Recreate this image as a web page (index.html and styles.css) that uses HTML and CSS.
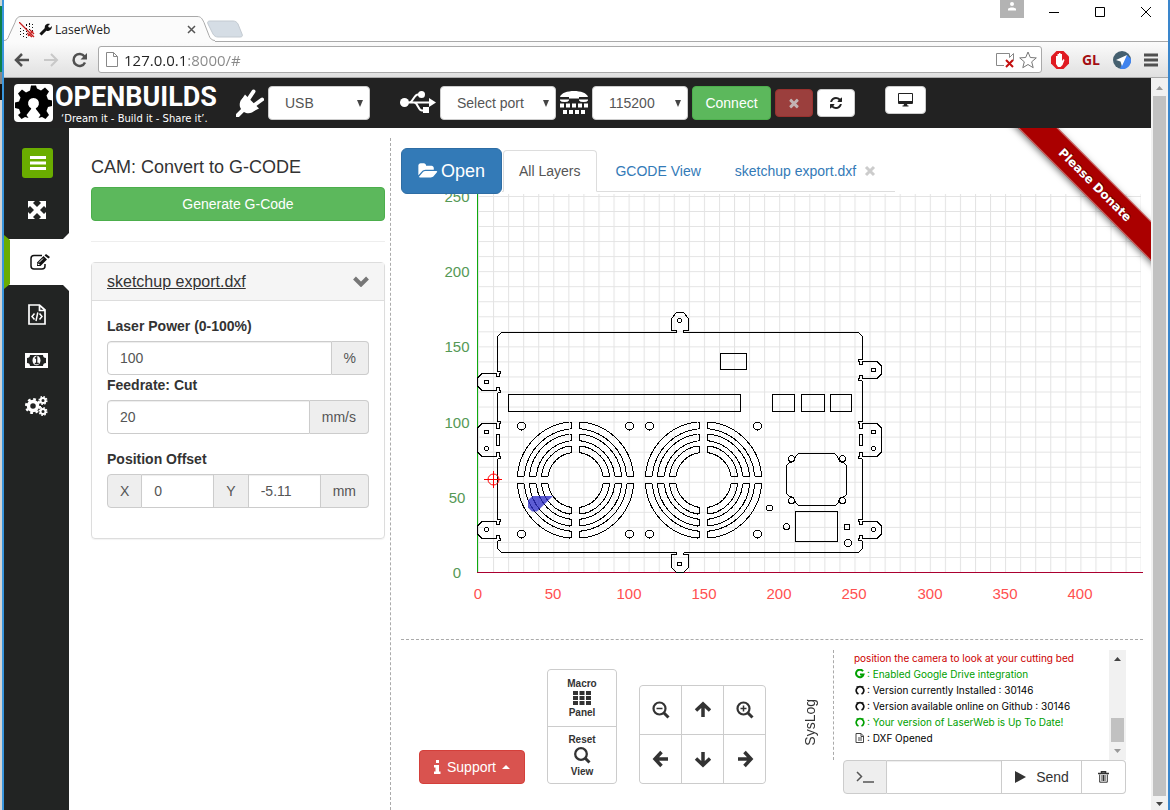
FILE: index.html
```html
<!DOCTYPE html>
<html lang="en">
<head>
<meta charset="utf-8">
<title>LaserWeb</title>
<link rel="stylesheet" href="styles.css">
</head>
<body>
<div class="window">

<header class="chrome">
  <div class="titlebar">
    <div class="tab">
      <svg class="tab-shape" width="240" height="26" viewBox="0 0 240 26" aria-hidden="true">
        <path d="M204 8c-1-2 0-3 2-3h23c2 0 4 1 5 3l4 10c1 2 0 3-2 3h-22c-2 0-4-1-5-3z" fill="#d5dde5" stroke="#c3cad1"/>
        <path d="M0 25c3 0 5-2 6-5l6-14c1-4 3-5 6-5h174c4 0 6 2 7 5l6 14c1 3 3 5 6 5v1H0z" fill="#fbfbfb"/>
        <path d="M0 24.500c3 0 4-2 5-5l6-13c1-4 3-6 6-6h176c4 0 5 2 7 6l5 13c1 3 3 5 6 5" fill="none" stroke="#a9a9a9"/>
      </svg>
      <svg class="favicon" width="16" height="16" viewBox="0 0 16 16" aria-hidden="true">
        <path d="M1.500 6v9M4.500 8v8M7.500 3v13M10.500 1v8M13.500 2v8M7 2.500h8" stroke="#111" stroke-dasharray="1 2" fill="none"/>
        <path d="M0 0l15 15M9 14l5-5M8 11l5 4M11 8l4 4" stroke="#c81e1e" stroke-width="1.300"/>
      </svg>
      <svg width="13" height="13" viewBox="0 0 13 13" aria-hidden="true"><path d="M1.500 11.500L7.500 5.500" stroke="#111" stroke-width="3"/><path d="M6 6c-1-3 1-6 5-5L9 3l1 1.500h1.500L13 3c0 3-2 5-5 5z" fill="#111"/></svg>
      <span class="tab-title">LaserWeb</span>
      <button class="plain" aria-label="Close tab"><svg width="9" height="9" viewBox="0 0 9 9"><path d="M1 1l7 7M8 1l-7 7" stroke="#555" stroke-width="1.500"/></svg></button>
    </div>
    <div class="window-buttons">
      <button class="plain user" aria-label="User"><svg width="10" height="9" viewBox="0 0 10 9"><circle cx="5" cy="2" r="2" fill="#fff"/><path d="M1 8.500V7c1-2 7-2 8 0v1.500z" fill="#fff"/></svg></button>
      <button class="plain" aria-label="Minimize"><svg width="12" height="12" viewBox="0 0 12 12"><path d="M1 6.500h10" stroke="#000"/></svg></button>
      <button class="plain" aria-label="Maximize"><svg width="12" height="12" viewBox="0 0 12 12"><path d="M1.500 1.500h9v9h-9z" stroke="#000" fill="none"/></svg></button>
      <button class="plain" aria-label="Close"><svg width="12" height="12" viewBox="0 0 12 12"><path d="M1 1l10 10M11 1L1 11" stroke="#000"/></svg></button>
    </div>
  </div>
  <div class="toolbar">
    <button class="plain" aria-label="Back"><svg width="16" height="14" viewBox="0 0 16 14"><path d="M15 7H2M8 1L2 7l6 6" fill="none" stroke="#505050" stroke-width="2.500"/></svg></button>
    <button class="plain" aria-label="Forward"><svg width="16" height="14" viewBox="0 0 16 14"><path d="M1 7h13M8 1l6 6-6 6" fill="none" stroke="#c8c8c8" stroke-width="2"/></svg></button>
    <button class="plain" aria-label="Reload"><svg width="16" height="16" viewBox="0 0 16 16"><path d="M13 10.500A6 6 0 1 1 12.500 4.500" fill="none" stroke="#505050" stroke-width="2.500"/><path d="M15 1v6.500H8.500z" fill="#505050"/></svg></button>
    <div class="address">
      <svg width="12" height="15" viewBox="0 0 12 15" aria-hidden="true"><path d="M.5.5h7l4 4v10H.5zM7.500.5v4h4" fill="#fff" stroke="#888"/></svg>
      <input class="url" type="text" value="127.0.0.1:8000/#" aria-label="Address">
      <svg width="20" height="17" viewBox="0 0 20 17" aria-hidden="true"><path d="M8 14.500H.5v-12h13v4l4-4v7" fill="none" stroke="#888"/><path d="M10 9l7 7M17 9l-7 7" stroke="#c40f0f" stroke-width="2"/></svg>
      <svg width="18" height="18" viewBox="0 0 18 18" aria-hidden="true"><path d="M9 1l2.300 5.500 6 .4-4.600 3.900 1.500 5.900L9 13.500l-5.200 3.200 1.500-5.900L.7 6.900l6-.4z" fill="#fff" stroke="#777"/></svg>
    </div>
    <button class="plain" aria-label="Blocker"><svg width="18" height="18" viewBox="0 0 18 18"><path d="M5.500 0h7L18 5.500v7L12.500 18h-7L0 12.500v-7z" fill="#e01b22"/><path d="M5 10V5h1.500v3V3H8v5V2h1.500v6V3H11v7l1.500-2 1 1-2 5-2 2H7l-2-3z" fill="#fff"/></svg></button>
    <button class="plain gl">GL</button>
    <button class="plain" aria-label="Send to device"><svg width="18" height="18" viewBox="0 0 18 18"><circle cx="9" cy="9" r="9" fill="#45606f"/><path d="M14 4l4 4a9 9 0 0 1-11 10l2-6z" fill="#3f83ee"/><path d="M14 4L3 9l4.500 1.500L9 15z" fill="#fff"/></svg></button>
    <button class="plain" aria-label="Menu"><svg width="14" height="14" viewBox="0 0 14 14"><path d="M0 2h14M0 7h14M0 12h14" stroke="#505050" stroke-width="3"/></svg></button>
  </div>
</header>

<div class="page">
<div class="app">
  <nav class="navbar">
    <a class="logo" href="#" aria-label="OpenBuilds">
      <svg width="39" height="38" viewBox="0 0 39 38" aria-hidden="true">
        <rect width="39" height="38" rx="4" fill="#fff"/>
        <path d="M12.500 31L17.500 24.500a5.500 5.500 0 1 1 4 0L26.500 31l-2 3 3.500-1 3.500 2 3.500-4-2.500-4 1.500-4 4-1v-5.500l-4-1-1.500-4 2.500-4-4-4-4 3-4-2L22 1.500h-5l-1 5-4 2-4-3-4 4 2.500 4-1.500 4-4 1V24l4 1 1.500 4L4 31l3.500 4 3.500-2 3.500 1z" fill="#000"/>
        <path d="M17.500 24l-3 14h10l-3-14z" fill="#fff"/>
      </svg>
      <span class="logo-text"><strong>OPENBUILDS</strong><small>‘Dream it - Build it - Share it’.</small></span>
    </a>
    <label class="field plug">
      <svg width="28" height="28" viewBox="0 0 28 28" aria-label="Connection"><path d="M1.500 26.500l6-6" stroke="#fff" stroke-width="4" stroke-linecap="round"/><path d="M7 9L19 21c-3 4-8 4-11 2l-3-3c-2-3-2-8 2-11z" fill="#fff"/><path d="M9 5.500L23 19.500 18 22 6 10z" fill="#fff"/><path d="M12.500 10l5-7.500M18.500 16l7.500-5.500" stroke="#fff" stroke-width="4" stroke-linecap="round"/></svg>
      <span class="select"><select class="w-usb"><option>USB</option></select><svg class="caret" width="6" height="7" viewBox="0 0 6 7"><path d="M0 0h6L3 7z" fill="#444"/></svg></span>
    </label>
    <label class="field usb">
      <svg width="36" height="24" viewBox="0 0 36 24" aria-label="Port"><circle cx="4.500" cy="11.500" r="4.500" fill="#fff"/><path d="M4 11.500h26M9 11.500c4 0 5-8 9-8h3M14 11.500c4 0 4 8 8 8h3" stroke="#fff" stroke-width="2" fill="none"/><path d="M29 7l7 4.500-7 4.500z" fill="#fff"/><circle cx="21.500" cy="3.500" r="3.500" fill="#fff"/><path d="M23 16h6v6h-6z" fill="#fff"/></svg>
      <span class="select"><select class="w-port"><option>Select port</option></select><svg class="caret" width="6" height="7" viewBox="0 0 6 7"><path d="M0 0h6L3 7z" fill="#444"/></svg></span>
    </label>
    <label class="field tty">
      <svg width="30" height="24" viewBox="0 0 30 24" aria-label="Baud rate"><path d="M1 7.500V6c2-8 26-8 28 0v1.500M1 8.500h9v1q-1 1.500-4.500 1.500T1 9.500zM20 8.500h9v1q-1 1.500-4.500 1.500T20 9.500zM10 7.500V6c2-1 8-1 10 0v1.500h9V6H1v1.500z" fill="#fff"/><path d="M1 14.500h28" stroke="#fff" stroke-width="4" stroke-dasharray="4 2"/><path d="M4 21h22" stroke="#fff" stroke-width="4" stroke-dasharray="4 2"/></svg>
      <span class="select"><select class="w-baud"><option>115200</option></select><svg class="caret" width="6" height="7" viewBox="0 0 6 7"><path d="M0 0h6L3 7z" fill="#444"/></svg></span>
    </label>
    <button class="btn success connect">Connect</button>
    <button class="btn danger disabled small" aria-label="Disconnect"><svg width="14" height="14" viewBox="0 0 1792 1792"><path fill="#c3b3b3" d="M1490 1322q0 40-28 68l-136 136q-28 28-68 28t-68-28l-294-294-294 294q-28 28-68 28t-68-28l-136-136q-28-28-28-68t28-68l294-294-294-294q-28-28-28-68t28-68l136-136q28-28 68-28t68 28l294 294 294-294q28-28 68-28t68 28l136 136q28 28 28 68t-28 68l-294 294 294 294q28 28 28 68z"/></svg></button>
    <button class="btn small" aria-label="Refresh"><svg width="14" height="14" viewBox="0 0 1792 1792"><path fill="#222" d="M1639 1056q0 5-1 7-64 268-268 434.500t-478 166.500q-146 0-282.500-55t-243.500-157l-129 129q-19 19-45 19t-45-19-19-45v-448q0-26 19-45t45-19h448q26 0 45 19t19 45-19 45l-137 137q71 66 161 102t187 36q134 0 250-65t186-179q11-17 53-117 8-23 30-23h192q13 0 22.500 9.500t9.500 22.500zm25-800v448q0 26-19 45t-45 19h-448q-26 0-45-19t-19-45 19-45l138-138q-148-137-349-137-134 0-250 65t-186 179q-11 17-53 117-8 23-30 23h-199q-13 0-22.500-9.500t-9.500-22.500v-7q65-268 270-434.500t480-166.500q146 0 284 55.500t245 156.500l130-129q19-19 45-19t45 19 19 45z"/></svg></button>
    <button class="btn small monitor" aria-label="Fullscreen"><svg width="15" height="14" viewBox="0 0 15 14"><path d="M1 0h13q1 0 1 1v9q0 1-1 1H9l.5 1.500h1v1h-6v-1h1L6 11H1q-1 0-1-1V1q0-1 1-1zm0 1v7h13V1z" fill="#222" fill-rule="evenodd"/></svg></button>
  </nav>

  <div class="body">
    <nav class="sidebar">
      <div class="side-top">
        <button class="menu-btn" aria-label="Menu"><svg width="16" height="14" viewBox="0 0 16 14"><path d="M0 1.500h16M0 7h16M0 12.500h16" stroke="#fff" stroke-width="3"/></svg></button>
        <a href="#" aria-label="Jog"><svg width="18" height="18" viewBox="0 0 18 18"><path d="M0 0h7L5 2l4 4 4-4-2-2h7v7l-2-2-4 4 4 4 2-2v7h-7l2-2-4-4-4 4 2 2H0v-7l2 2 4-4-4-4-2 2z" fill="#fff"/></svg></a>
      </div>
      <a class="active" href="#" aria-label="CAM"><svg width="20" height="16" viewBox="0 0 20 16"><path d="M12 1.500H4q-3 0-3 3V12q0 3 3 3h8q3 0 3-3v-2" fill="none" stroke="#111" stroke-width="1.500"/><path d="M7 12V8.500L13.500 2 17 5.500 10.500 12zM14.500 1.500L16 0l4 3-1.500 1.500z" fill="#111"/><path d="M9 8.500L13 4.500M8 9.500v1h1.500" stroke="#fff" fill="none"/></svg></a>
      <div class="side-rest">
        <a href="#" aria-label="G-code"><svg width="18" height="21" viewBox="0 0 18 21"><path d="M1 1h10.500L17 6v14H1zM11.500 1v5.500H17" fill="none" stroke="#fff" stroke-width="1.700"/><path d="M6.500 9.500L4 12.500l2.500 3M11.500 9.500l2.500 3-2.500 3M9.800 8.500L8 17" fill="none" stroke="#fff" stroke-width="1.500"/></svg></a>
        <a href="#" aria-label="Quote"><svg width="23" height="15" viewBox="0 0 23 15"><path d="M0 0h23v15H0zm2 5v5q3 0 3 3h13q0-3 3-3V5q-3 0-3-3H5q0 3-3 3z" fill="#fff" fill-rule="evenodd"/><ellipse cx="11.500" cy="7.500" rx="4" ry="4.800" fill="#fff"/><path d="M10 5.500L11.700 4v6.500M9.800 10.500h4" stroke="#222" stroke-width="1.300" fill="none"/></svg></a>
        <a href="#" aria-label="Settings"><svg width="23" height="20" viewBox="0 0 23 20"><g fill="none" stroke="#fff"><circle cx="8" cy="10" r="4.500" stroke-width="3.500"/><circle cx="8" cy="10" r="6.800" stroke-width="2.500" stroke-dasharray="2.700 2.640"/><circle cx="18" cy="4.500" r="2.500" stroke-width="2"/><circle cx="18" cy="4.500" r="3.800" stroke-width="1.500" stroke-dasharray="1.500 1.480"/><circle cx="18" cy="15.500" r="2.500" stroke-width="2"/><circle cx="18" cy="15.500" r="3.800" stroke-width="1.500" stroke-dasharray="1.500 1.480"/></g></svg></a>
      </div>
    </nav>

    <section class="cam">
      <h1>CAM: Convert to G-CODE</h1>
      <button class="btn success block">Generate G-Code</button>
      <hr>
      <div class="panel">
        <div class="panel-head"><a href="#">sketchup export.dxf</a><svg width="16" height="11" viewBox="0 0 16 11" aria-hidden="true"><path d="M1.500 2L8 8.500 14.500 2" fill="none" stroke="#777" stroke-width="4"/></svg></div>
        <form class="panel-body">
          <label for="power">Laser Power (0-100%)</label>
          <div class="group"><input id="power" type="text" value="100"><span class="addon">%</span></div>
          <label for="feed">Feedrate: Cut</label>
          <div class="group last"><input id="feed" type="text" value="20"><span class="addon">mm/s</span></div>
          <label for="offx">Position Offset</label>
          <div class="group"><span class="addon">X</span><input id="offx" type="text" value="0"><span class="addon">Y</span><input type="text" value="-5.11" aria-label="Y offset"><span class="addon">mm</span></div>
        </form>
      </div>
    </section>

    <main class="work">
      <div class="tabs-row">
        <button class="btn primary open"><svg width="20" height="18" viewBox="0 0 1920 1792"><path fill="#fff" d="M1879 952q0 31-31 66l-336 396q-43 51-120.500 86.500t-143.500 35.500h-1088q-34 0-60.500-13t-26.500-43q0-31 31-66l336-396q43-51 120.500-86.500t143.500-35.500h1088q34 0 60.500 13t26.500 43zm-343-344v160h-832q-94 0-197 47.500t-164 119.500l-337 396-5 6q0-4-.5-12.500t-.5-12.500v-960q0-92 66-158t158-66h320q92 0 158 66t66 158v32h544q92 0 158 66t66 158z"/></svg>Open</button>
        <div class="tabs">
          <a class="current" href="#">All Layers</a>
          <a href="#">GCODE View</a>
          <a href="#">sketchup export.dxf <svg width="12" height="12" viewBox="0 0 12 12"><path d="M2 2l8 8M10 2l-8 8" stroke="#ccc" stroke-width="3"/></svg></a>
        </div>
      </div>

      <svg class="viewer" viewBox="401 194 742 445" preserveAspectRatio="xMinYMin slice" role="img" aria-label="Cutting bed">
        <defs>
          <pattern id="grid" x="478" y="196" width="15.060" height="15.040" patternUnits="userSpaceOnUse"><path d="M0 .5H15.060M.5 0V15.040" stroke="#000" stroke-opacity=".11" fill="none"/></pattern>
          <g id="quarter">
            <path d="M-57-3.500Q-58-3.500-58-5A58 58 0 0 1-6-58Q-4-58-4-57V-52Q-4-51-6-51A51 51 0 0 0-51-6Q-51-3.500-53-3.500Z"/>
            <path d="M-45-3.500Q-46-3.500-46-5A46 46 0 0 1-6-46Q-4-46-4-45V-40Q-4-39-6-39A39 39 0 0 0-39-6Q-39-3.500-41-3.500Z"/>
            <path d="M-33-3.500Q-34-3.500-34-5A34 34 0 0 1-6-34Q-4-34-4-33V-28Q-4-27-6-27A27 27 0 0 0-27-6Q-27-3.500-29-3.500Z"/>
          </g>
          <g id="fan">
            <use href="#quarter"/><use href="#quarter" transform="scale(-1 1)"/><use href="#quarter" transform="scale(1 -1)"/><use href="#quarter" transform="scale(-1 -1)"/>
            <circle cx="-54" cy="-54" r="4"/><circle cx="54" cy="-54" r="4"/><circle cx="-54" cy="54" r="4"/><circle cx="54" cy="54" r="4"/>
          </g>
          <path id="lug" d="M0-2H3V0H2V3H-1V0H-15.500L-20 4.500V12.500L-15.500 17H-1V14H2V17H3V19H0"/>
          <path id="lug2" d="M0-2H3V0H2V5H-1V0H-15.500L-20 4.500V28.500L-15.500 33H-1V29H2V33H3V35H0M-1 11H2V22H-1Z"/>
        </defs>
        <rect x="478" y="194" width="663" height="379" fill="url(#grid)"/>
        <path class="axis-line" d="M477.500 194V572" stroke="#0faa0f"/>
        <path class="axis-line" d="M477 572.500H1143" stroke="#aa0030"/>
        <g class="axis y">
          <text x="457" y="202">250</text><text x="457" y="277">200</text><text x="457" y="352">150</text><text x="457" y="428">100</text><text x="457" y="503">50</text><text x="457" y="578">0</text>
        </g>
        <g class="axis x">
          <text x="478" y="599">0</text><text x="553" y="599">50</text><text x="629" y="599">100</text><text x="704" y="599">150</text><text x="779" y="599">200</text><text x="854" y="599">250</text><text x="930" y="599">300</text><text x="1005" y="599">350</text><text x="1080" y="599">400</text>
        </g>
        <g class="drawing">
          <path d="M676.500 332.500H501.500L497.500 336.500V371.500M497.500 392.500V421.500M497.500 458.500V519.500M497.500 540.500V548.500L501.500 552.500H676.500M683.500 332.500H858.500L862.500 336.500V359.500M862.500 380.500V421.500M862.500 458.500V519.500M862.500 540.500V548.500L858.500 552.500H683.500"/>
          <path d="M676.500 332.500V330.500H671.500V318.500L676.500 312.500H683.500L688.500 318.500V330.500H683.500V332.500M676.500 552.500V554.500H671.500V567.500L676.500 572.500H683.500L688.500 567.500V554.500H683.500V552.500"/>
          <use href="#lug" x="497.500" y="373.500"/><use href="#lug2" x="497.500" y="423.500"/><use href="#lug" x="497.500" y="521.500"/>
          <g transform="translate(862 0) scale(-1 1)"><use href="#lug" x="0.500" y="361.500"/><use href="#lug2" x="0.500" y="423.500"/><use href="#lug" x="0.500" y="521.500"/></g>
          <circle cx="486.500" cy="382" r="2"/><circle cx="486.500" cy="432" r="2"/><circle cx="486.500" cy="448.500" r="2"/><circle cx="486.500" cy="529.500" r="2"/>
          <circle cx="873.500" cy="370" r="2"/><circle cx="873.500" cy="432" r="2"/><circle cx="873.500" cy="448.500" r="2"/><circle cx="873.500" cy="529.500" r="2"/>
          <circle cx="679.500" cy="320.500" r="2"/><circle cx="679.500" cy="564" r="2"/>
          <path d="M508.500 394.500H740.500V411.500H508.500ZM720.500 353.500H746.500V369.500H720.500ZM772.500 394.500H794.500V411.500H772.500ZM801.500 394.500H824.500V411.500H801.500ZM830.500 394.500H851.500V411.500H830.500ZM795.500 511.500H837.500V541.500H795.500Z"/>
          <path d="M798.500 453.500H834.500L837.500 456.500Q838.500 462.500 843.500 462.500L846.500 465.500V493.500Q846.500 496.500 841.500 497.500Q838.500 498.500 838.500 502.500L835.500 505.500H798.500L795.500 502.500Q794.500 496.500 789.500 496.500L786.500 493.500V465.500L789.500 462.500Q794.500 462.500 795.500 456.500Z"/>
          <circle cx="791.500" cy="458.500" r="3"/><circle cx="842.500" cy="458.500" r="3"/><circle cx="791.500" cy="500.500" r="3"/><circle cx="842.500" cy="500.500" r="3"/>
          <circle cx="769.500" cy="508" r="3"/><circle cx="786.500" cy="526.500" r="3"/><circle cx="847" cy="527" r="3"/><circle cx="848" cy="543" r="3.500"/>
          <use href="#fan" x="575.500" y="480"/><use href="#fan" x="703.500" y="480"/>
        </g>
        <path d="M528 500l5-4h20l-16 15.500h-5l-4-4z" fill="#3030c8" fill-opacity=".78"/>
        <path d="M484 479.500h18M493.500 471v17" stroke="#f00"/><circle cx="493.500" cy="479.500" r="5.500" fill="none" stroke="#f00"/>
      </svg>

      <div class="bottom">
        <button class="btn danger support"><svg width="7" height="14" viewBox="0 0 7 14"><path d="M2 0h3v3H2zM0 5h5v6.500h1.500V14H0v-2.500h1.500v-4H0z" fill="#fff"/></svg>Support<svg width="8" height="4" viewBox="0 0 8 4"><path d="M0 4l4-4 4 4z" fill="#fff"/></svg></button>
        <div class="macro">
          <button>Macro<svg width="18" height="14" viewBox="0 0 18 14"><path d="M0 2h18M0 7h18M0 12h18" stroke="#333" stroke-width="4" stroke-dasharray="5 1.500"/></svg>Panel</button>
          <button>Reset<svg width="18" height="17" viewBox="0 0 18 17"><circle cx="8" cy="7" r="5.800" fill="none" stroke="#333" stroke-width="2.300"/><path d="M12 11l4.500 4.500" stroke="#333" stroke-width="3"/></svg>View</button>
        </div>
        <div class="jog">
          <button aria-label="Zoom out"><svg width="18" height="18" viewBox="0 0 18 18"><circle cx="7.500" cy="7.500" r="6" fill="none" stroke="#333" stroke-width="2.200"/><path d="M11.500 11.500l5 5" stroke="#333" stroke-width="3"/><path d="M4.500 7.500h6" stroke="#333" stroke-width="1.500"/></svg></button>
          <button aria-label="Up"><svg width="18" height="18" viewBox="0 0 18 18"><path d="M9 16V4M2 9.500L9 3l7 6.500" fill="none" stroke="#333" stroke-width="3.500"/></svg></button>
          <button aria-label="Zoom in"><svg width="18" height="18" viewBox="0 0 18 18"><circle cx="7.500" cy="7.500" r="6" fill="none" stroke="#333" stroke-width="2.200"/><path d="M11.500 11.500l5 5" stroke="#333" stroke-width="3"/><path d="M4.500 7.500h6M7.500 4.500v6" stroke="#333" stroke-width="1.500"/></svg></button>
          <button aria-label="Left"><svg width="18" height="18" viewBox="0 0 18 18"><path d="M16 9H4M9.500 2L3 9l6.500 7" fill="none" stroke="#333" stroke-width="3.500"/></svg></button>
          <button aria-label="Down"><svg width="18" height="18" viewBox="0 0 18 18"><path d="M9 2v12M2 8.500L9 15l7-6.500" fill="none" stroke="#333" stroke-width="3.500"/></svg></button>
          <button aria-label="Right"><svg width="18" height="18" viewBox="0 0 18 18"><path d="M2 9h12M8.500 2L15 9l-6.500 7" fill="none" stroke="#333" stroke-width="3.500"/></svg></button>
        </div>
        <span class="syslog">SysLog</span>
        <div class="console">
          <div class="log">
            <div class="lines">
              <p class="red">position the camera to look at your cutting bed</p>
              <p class="green"><svg width="10" height="10" viewBox="0 0 10 10"><path d="M8 2.300A3.800 3.800 0 1 0 8.500 5.500H5" fill="none" stroke="#00a000" stroke-width="2"/></svg>: Enabled Google Drive integration</p>
              <p><svg width="10" height="10" viewBox="0 0 10 10"><path d="M3.500 9A3.800 3.800 0 1 1 6.500 9" fill="none" stroke="#111" stroke-width="1.700"/><path d="M1.500 1l2.500.7L2 4zM8.500 1L6 1.700 8 4z" fill="#111"/></svg>: Version currently Installed : 30146</p>
              <p><svg width="10" height="10" viewBox="0 0 10 10"><path d="M3.500 9A3.800 3.800 0 1 1 6.500 9" fill="none" stroke="#111" stroke-width="1.700"/><path d="M1.500 1l2.500.7L2 4zM8.500 1L6 1.700 8 4z" fill="#111"/></svg>: Version available online on Github : 30146</p>
              <p class="green"><svg width="10" height="10" viewBox="0 0 10 10"><path d="M3.500 9A3.800 3.800 0 1 1 6.500 9" fill="none" stroke="#00a000" stroke-width="1.700"/><path d="M1.500 1l2.500.7L2 4zM8.500 1L6 1.700 8 4z" fill="#00a000"/></svg>: Your version of LaserWeb is Up To Date!</p>
              <p><svg width="10" height="10" viewBox="0 0 10 10"><path d="M1 .5h5l2.500 2.500v6.500H1zM6 .5v3h2.500M3 5h4M3 7h4" fill="none" stroke="#444"/></svg>: DXF Opened</p>
            </div>
            <div class="scroll log-scroll" aria-hidden="true"><svg width="7" height="4" viewBox="0 0 7 4"><path d="M0 4l3.500-4L7 4z" fill="#444"/></svg><span class="thumb"></span><svg width="7" height="4" viewBox="0 0 7 4"><path d="M0 0h7L3.500 4z" fill="#999"/></svg></div>
          </div>
          <form class="group send">
            <label class="addon" for="cmd" aria-label="Command"><svg width="18" height="12" viewBox="0 0 18 12"><path d="M1 1l4.500 4.500L1 10M7 11h11" fill="none" stroke="#555" stroke-width="1.500"/></svg></label>
            <input id="cmd" type="text">
            <button type="button"><svg width="12" height="12" viewBox="0 0 12 12"><path d="M1 0l11 6-11 6z" fill="#333"/></svg>Send</button>
            <button type="button" class="trash" aria-label="Clear log"><svg width="11" height="12" viewBox="0 0 11 12"><path d="M3.500 2V.7h4V2M0 2.500h11" fill="none" stroke="#333" stroke-width="1.500"/><path d="M1.700 3.500V11.200h7.600V3.500M4 4v6M5.500 4v6M7 4v6" fill="none" stroke="#333" stroke-width="1"/></svg></button>
          </form>
        </div>
      </div>
      <div class="ribbon"><a href="#">Please Donate</a></div>
    </main>
  </div>
</div>
<div class="scroll page-scroll" aria-hidden="true"><svg width="7" height="4" viewBox="0 0 7 4"><path d="M0 4l3.500-4L7 4z" fill="#999"/></svg><span class="thumb"></span><svg width="7" height="4" viewBox="0 0 7 4"><path d="M0 0h7L3.500 4z" fill="#444"/></svg></div>
</div>
</div>
</body>
</html>
```
FILE: styles.css
```css
* { box-sizing: border-box; }

body {
  margin: 0;
  padding-left: 2px;
  min-height: 100vh;
  background: linear-gradient(#ccd6d2 6px, #0c8048 6px 72px, #888 72px 84px, #111 84px 100px, #d3d3d3 100px);
  font: 14px/20px "Liberation Sans", Arial, sans-serif;
  color: #333;
}
a { color: #337ab7; text-decoration: none; }
button, input, select { font: inherit; color: inherit; margin: 0; }
svg { display: block; flex: none; }

.window {
  min-height: 100vh;
  display: flex;
  flex-direction: column;
  border-left: 2px solid #3a96dd;
  border-right: 2px solid #3a86cc;
  background: #fff;
}
.plain { border: 0; padding: 0; background: none; display: flex; align-items: center; justify-content: center; }

/* browser chrome */
.titlebar { height: 42px; display: flex; justify-content: space-between; border-bottom: 1px solid #a9a9a9; }
.tab {
  position: relative;
  align-self: flex-end;
  width: 240px;
  height: 24px;
  padding: 1px 48px 0 15px;
  display: flex;
  align-items: center;
  gap: 3px;
  font: 12px/16px "Open Sans", sans-serif;
  color: #222;
}
.tab > * { position: relative; }
.tab .tab-shape { position: absolute; left: 0; top: -1px; }
.tab .favicon { margin-right: 1px; }
.tab-title { flex: 1; }
.window-buttons { display: flex; align-items: flex-start; gap: 34px; padding-right: 16px; }
.window-buttons .plain { margin-top: 6px; }
.window-buttons .user { width: 24px; height: 18px; margin: 0 -10px 0 0; background: #b3b3b3; align-items: flex-start; padding-top: 2px; }
.toolbar {
  height: 36px;
  padding: 0 10px;
  display: flex;
  align-items: center;
  gap: 13px;
  background: linear-gradient(#fbfbfb, #e0e0e0);
  border-bottom: 1px solid #aaa;
}
.address {
  flex: 1;
  height: 27px;
  margin: 0 -4px 0 -3px;
  padding: 0 4px 0 7px;
  display: flex;
  align-items: center;
  gap: 3px;
  background: #fff;
  border: 1px solid #a9a9a9;
  border-radius: 3px;
}
.url {
  flex: 1;
  min-width: 0;
  border: 0;
  padding: 0 3px;
  font: 15px/20px "Open Sans", sans-serif;
  color: transparent;
  background: linear-gradient(90deg, #222 66px, #888 66px);
  -webkit-background-clip: text;
  background-clip: text;
}
.gl { font: bold 14px/18px "Open Sans", sans-serif; color: #a30d12; }

.page { flex: 1; display: flex; }
.app { flex: 1; min-width: 0; display: flex; flex-direction: column; }

/* scroll bars */
.scroll { display: flex; flex-direction: column; align-items: center; background: #f1f1f1; width: 17px; }
.scroll .thumb { background: #c1c1c1; width: 13px; }
.page-scroll { padding: 8px 0 4px; gap: 6px; }
.page-scroll .thumb { flex: 1; }
.log-scroll { padding: 7px 0; gap: 7px; }
.log-scroll .thumb { height: 24px; margin-top: auto; }

/* buttons */
.btn {
  display: inline-flex;
  align-items: center;
  justify-content: center;
  height: 34px;
  padding: 0 12px;
  border: 1px solid #ccc;
  border-radius: 4px;
  background: #fff;
  white-space: nowrap;
}
.success { background: #5cb85c; border-color: #4cae4c; color: #fff; }
.primary { background: #337ab7; border-color: #2e6da4; color: #fff; }
.danger { background: #d9534f; border-color: #d43f3a; color: #fff; }
.danger.disabled { background: #9b3f3d; border-color: #98312e; }
.small { height: 28px; padding: 0 11px; }
.block { width: 100%; }

/* top bar */
.navbar { height: 50px; padding-left: 10px; display: flex; align-items: center; gap: 4px; background: #222; }
.logo { display: flex; align-items: center; gap: 2px; color: #fff; }
.logo-text { width: 164px; display: flex; flex-direction: column; white-space: nowrap; }
.logo strong { font: bold 27px/32px Roboto, sans-serif; }
.logo small { font: 10px/12px "DejaVu Sans", sans-serif; padding-left: 6px; }
.field { display: flex; align-items: center; gap: 4px; }
.plug { margin-left: 13px; }
.usb { margin-left: 26px; }
.tty { margin-left: -1px; gap: 3px; }
.connect { width: 79px; }
.select { position: relative; display: flex; }
.select select {
  appearance: none;
  height: 34px;
  padding: 0 16px;
  border: 1px solid #ccc;
  border-radius: 4px;
  background: #fff;
  color: #555;
}
.caret { position: absolute; right: 7px; top: 14px; pointer-events: none; }
.w-usb { width: 102px; }
.w-port { width: 116px; }
.w-baud { width: 96px; }
.monitor { align-self: flex-start; margin: 8px 0 0 26px; padding: 0 12px; }

/* side menu */
.body { flex: 1; display: flex; }
.sidebar { width: 65px; display: flex; flex-direction: column; }
.sidebar a { height: 46px; display: flex; align-items: center; justify-content: center; }
.side-top { padding: 20px 0 6px; background: #222423; clip-path: polygon(0 0, 100% 0, 100% calc(100% - 6px), calc(100% - 6px) 100%, 0 100%); }
.menu-btn { width: 31px; height: 30px; margin: 0 0 9px 18px; border: 0; border-radius: 3px; padding: 0; background: #6aad00; display: flex; align-items: center; justify-content: center; }
.sidebar .active { position: relative; padding-left: 6px; }
.active::before { content: ""; position: absolute; left: 0; top: -4px; bottom: -4px; width: 6px; background: #6aad00; clip-path: polygon(0 0, 100% 5px, 100% calc(100% - 5px), 0 100%); z-index: 1; }
.side-rest { flex: 1; padding-top: 6px; background: #222423; clip-path: polygon(0 0, calc(100% - 6px) 0, 100% 6px, 100% 100%, 0 100%); }

/* CAM column */
.cam { width: 322px; margin-top: 10px; padding: 18px 5px 0 22px; border-right: 1px dashed #aaa; }
.cam h1 { margin: 0 0 9px; font-size: 18px; line-height: 22px; font-weight: 400; }
.cam hr { border: 0; border-top: 1px solid #eee; margin: 20px 0; }
.panel { height: 277px; border: 1px solid #ddd; border-radius: 4px; box-shadow: 0 1px 1px rgba(0, 0, 0, .05); }
.panel-head { height: 38px; padding: 0 15px; display: flex; align-items: center; justify-content: space-between; background: #f5f5f5; border-bottom: 1px solid #ddd; font-size: 16px; }
.panel-head a { color: #333; text-decoration: underline; }
.panel-body { padding: 15px; }
.panel-body label { display: block; font-weight: 700; margin-bottom: 5px; }
.group { display: flex; height: 34px; }
.panel-body .group.last { margin-bottom: 15px; }
.group > * { border: 1px solid #ccc; border-left-width: 0; }
.group > :first-child { border-left-width: 1px; border-radius: 4px 0 0 4px; }
.group > :last-child { border-radius: 0 4px 4px 0; }
.group input { flex: 1; min-width: 0; padding: 0 12px; background: #fff; color: #555; box-shadow: inset 0 1px 1px rgba(0, 0, 0, .075); }
.addon { padding: 0 12px; display: flex; align-items: center; background: #eee; color: #555; }

/* work area */
.work { position: relative; flex: 1; min-width: 0; padding: 20px 8px 0 10px; display: flex; flex-direction: column; }
.tabs-row { display: flex; align-items: center; }
.open { height: 46px; width: 101px; padding: 0; gap: 3px; border-radius: 6px; font-size: 18px; }
.tabs { height: 42px; display: flex; gap: 2px; border-bottom: 1px solid #ddd; }
.tabs a { height: 42px; display: flex; align-items: center; gap: 8px; padding: 0 16px; border-radius: 4px 4px 0 0; }
.tabs .current { margin-left: 1px; padding: 0 16px 0 15px; border: 1px solid #ddd; border-bottom-color: #fff; background: #fff; color: #555; }
.tabs a:last-child { padding-right: 19px; }
.viewer { width: 100%; aspect-ratio: 742 / 445; overflow: hidden; }
.axis { font-size: 15px; text-anchor: middle; }
.axis.y { fill: #559955; }
.axis.x { fill: #ff5050; }
.drawing { fill: none; stroke: #000; }
.drawing, .axis-line { shape-rendering: crispEdges; }

.bottom { flex: 1; padding: 10px 17px 16px 18px; display: flex; align-items: flex-end; gap: 22px; border-top: 1px dashed #aaa; }
.support { width: 106px; margin-bottom: 10px; padding: 0; gap: 6px; }
.macro, .jog { margin-bottom: 10px; border: 1px solid #ccc; border-radius: 4px; overflow: hidden; display: grid; gap: 1px; background: #ccc; }
.macro { width: 70px; grid-auto-rows: 56px; font-size: 10px; line-height: 13px; }
.macro button { border: 0; padding: 0; background: #fff; display: flex; flex-direction: column; align-items: center; justify-content: center; gap: 1px; font-weight: 700; }
.jog { grid-template-columns: repeat(3, 41px); grid-auto-rows: 48px; }
.jog button { border: 0; padding: 0; background: #fff; display: flex; align-items: center; justify-content: center; }
.syslog { writing-mode: vertical-rl; transform: rotate(180deg); margin: 0 -9px 48px 12px; }
.console { flex: 1; min-width: 0; }
.log { height: 110px; border-left: 1px dashed #aaa; display: flex; overflow: hidden; }
.lines { flex: 1; padding-left: 20px; font: 10px/16px Inter, sans-serif; white-space: nowrap; color: #000; }
.lines p { margin: 0; display: flex; align-items: center; gap: 2px; padding-left: 1px; }
.lines .red { color: #c00; padding-left: 0; }
.lines .green { color: #00a000; }
.send { margin-left: 10px; }
.send .addon { width: 44px; justify-content: center; }
.send button { width: 80px; padding: 0; display: flex; align-items: center; justify-content: center; gap: 10px; background: #fff; }
.send .trash { width: 44px; }

.ribbon { position: absolute; top: 0; right: 0; width: 150px; height: 150px; overflow: hidden; pointer-events: none; }
.ribbon a {
  position: absolute;
  left: -16px;
  top: 43px;
  width: 220px;
  height: 28px;
  transform: rotate(45deg);
  background: #a00;
  border: 1px solid #c66;
  box-shadow: 0 2px 6px rgba(0, 0, 0, .5);
  color: #fff;
  font: bold 12px/26px "DejaVu Sans", sans-serif;
  text-align: center;
  text-shadow: 0 -1px rgba(0, 0, 0, .5);
  pointer-events: auto;
}
```
